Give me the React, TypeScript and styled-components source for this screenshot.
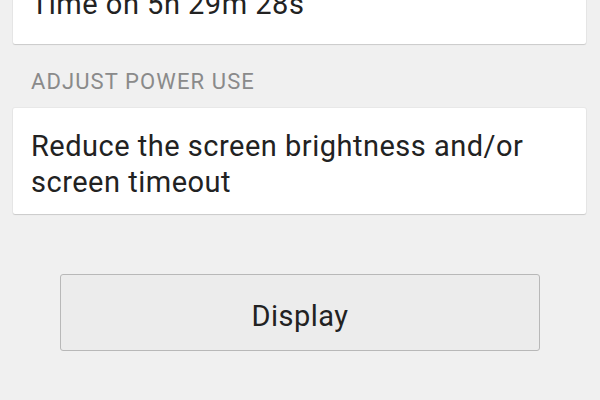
import React from 'react'
import styled, { createGlobalStyle } from 'styled-components'

const GlobalStyle = createGlobalStyle`
  html, body {
    margin: 0;
    padding: 0;
    background: #f0f0f0;
  }
  body {
    font-family: Roboto, "Noto Sans", "Liberation Sans", sans-serif;
  }
`

const Screen = styled.div`
  width: 600px;
  height: 400px;
  overflow: hidden;
  background: #f0f0f0;
`

// page is scrolled: the first card starts above the viewport
const Content = styled.div<{ scroll: number }>`
  margin-top: ${({ scroll }) => -scroll}px;
  display: flex;
  flex-direction: column;
`

const Card = styled.div<{ padding?: string }>`
  margin: 0 14px 0 13px;
  padding: ${({ padding }) => padding || '20px 18px'};
  background: #ffffff;
  border-radius: 2px;
  box-shadow: 0 1px 1px rgba(0, 0, 0, 0.13), 0 0 0 1px rgba(0, 0, 0, 0.03);
  font-size: 29px;
  line-height: 36px;
  letter-spacing: 0.5px;
  color: #222222;
`

const SectionLabel = styled.div`
  padding: 25px 31px 13px;
  font-size: 22px;
  line-height: 26px;
  letter-spacing: 1.1px;
  color: #8a8a8a;
`

const ButtonRow = styled.div`
  display: flex;
  justify-content: center;
  padding-top: 60px;
`

const Button = styled.button`
  width: 480px;
  height: 77px;
  padding: 6px 0 0;
  display: flex;
  align-items: center;
  justify-content: center;
  background: #ececec;
  border: 1px solid #b8b8b8;
  border-radius: 3px;
  font-family: inherit;
  font-size: 29px;
  letter-spacing: 0.5px;
  color: #222222;
  cursor: pointer;
`

export default function App() {
  return (
    <>
      <GlobalStyle />
      <Screen>
        <Content scroll={34}>
          <Card padding="20px 18px 22px">Time on 5h 29m 28s</Card>
          <SectionLabel>ADJUST POWER USE</SectionLabel>
          <Card padding="20px 18px 14px">
            Reduce the screen brightness and/or screen timeout
          </Card>
          <ButtonRow>
            <Button>Display</Button>
          </ButtonRow>
        </Content>
      </Screen>
    </>
  )
}
